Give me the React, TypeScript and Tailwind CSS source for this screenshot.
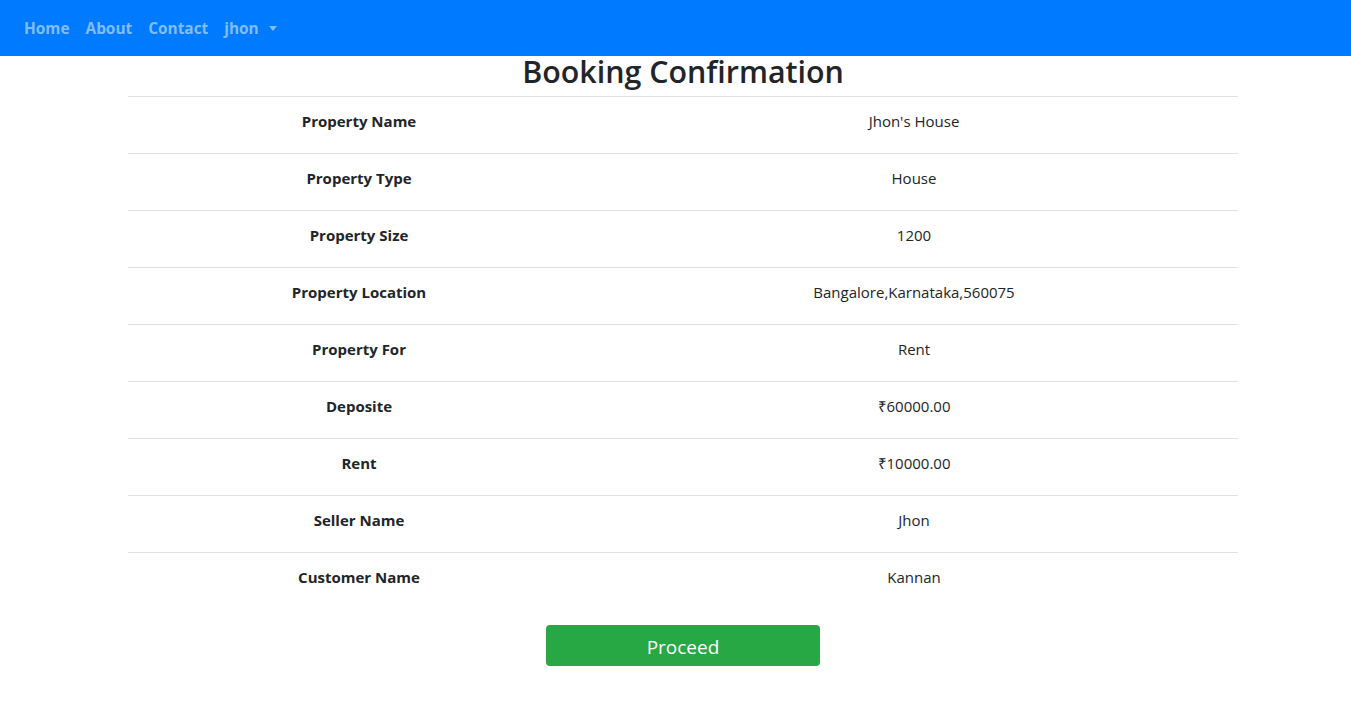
const rows: [string, string][] = [
  ["Property Name", "Jhon's House"],
  ["Property Type", "House"],
  ["Property Size", "1200"],
  ["Property Location", "Bangalore,Karnataka,560075"],
  ["Property For", "Rent"],
  ["Deposite", "₹60000.00"],
  ["Rent", "₹10000.00"],
  ["Seller Name", "Jhon"],
  ["Customer Name", "Kannan"],
];

export default function App() {
  return (
    <div className="min-h-[703px] bg-white text-[#212529] font-['Open_Sans',sans-serif]">
      {/* NAVBAR */}
      <nav className="h-14 bg-[#007bff] flex items-center px-4 pt-[2px]">
        {["Home", "About", "Contact"].map((l) => (
          <a key={l} className="px-2 text-[15.4px] font-bold text-[#80bdff]">
            {l}
          </a>
        ))}
        <a className="px-2 text-[15.4px] font-bold text-[#80bdff] flex items-center">
          jhon
          <span className="ml-[10px] border-t-[5px] border-x-[4px] border-x-transparent border-t-[#80bdff]" />
        </a>
      </nav>

      {/* page is laid out on a 1366 canvas, so the column sits at 128px */}
      <div className="w-[1110px] ml-[128px]">
        <h2 className="h-10 flex items-start justify-center pt-[1px] text-[30.4px] font-semibold leading-none">
          Booking Confirmation
        </h2>

        {rows.map(([k, v]) => (
          <div
            key={k}
            className="h-[57px] flex items-center pb-[8px] text-[15px] border-t border-[#dee2e6]"
          >
            <div className="w-[462px] text-center font-bold">{k}</div>
            <div className="flex-1 text-center">{v}</div>
          </div>
        ))}

        <div className="flex justify-center mt-4">
          <button className="w-[274px] h-[41px] pt-[3px] bg-[#28a745] text-white text-[19px] rounded">
            Proceed
          </button>
        </div>
      </div>
    </div>
  );
}
